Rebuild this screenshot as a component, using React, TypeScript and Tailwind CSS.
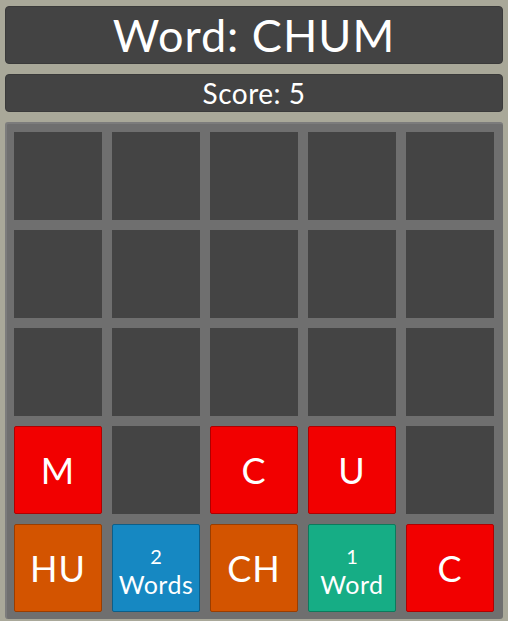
import React from "react";

type Cell =
  | { kind: "empty" }
  | { kind: "tile"; color: string; text: string }
  | { kind: "count"; color: string; n: string; label: string };

const E: Cell = { kind: "empty" };

const cells: Cell[] = [
  E, E, E, E, E,
  E, E, E, E, E,
  E, E, E, E, E,
  { kind: "tile", color: "red", text: "M" },
  E,
  { kind: "tile", color: "red", text: "C" },
  { kind: "tile", color: "red", text: "U" },
  E,
  { kind: "tile", color: "orange", text: "HU" },
  { kind: "count", color: "blue", n: "2", label: "Words" },
  { kind: "tile", color: "orange", text: "CH" },
  { kind: "count", color: "green", n: "1", label: "Word" },
  { kind: "tile", color: "red", text: "C" },
];

function colorClass(c: string) {
  switch (c) {
    case "red":
      return "bg-[#f20000] border-[#b00000]";
    case "orange":
      return "bg-[#d35400] border-[#9a3d00]";
    case "blue":
      return "bg-[#1688c2] border-[#0d5e88]";
    case "green":
      return "bg-[#16ad85] border-[#0d7a5c]";
    default:
      return "bg-[#444444] border-[#444444]";
  }
}

export default function App() {
  return (
    <div
      className="w-[508px] h-[621px] bg-[#a9a899] flex flex-col gap-[10px] px-[5px] pt-[6px] overflow-hidden text-white"
      style={{ fontFamily: "Lato, 'Open Sans', sans-serif" }}
    >
      <div className="h-[58px] shrink-0 rounded-[4px] bg-[#434343] border border-[#3a3a3a] flex items-center justify-center text-[45px] leading-none tracking-[1px]">
        Word: CHUM
      </div>
      <div className="h-[38px] shrink-0 rounded-[4px] bg-[#434343] border border-[#3a3a3a] flex items-center justify-center text-[28px] leading-none tracking-[0.5px]">
        Score: 5
      </div>
      <div className="h-[497px] shrink-0 rounded-[3px] bg-[#6f6f6f] border-t-2 border-l-2 border-[#7c7c7c] pt-[8px] pl-[7px] pr-[9px] pb-[7px] grid grid-cols-5 grid-rows-5 gap-[10px]">
        {cells.map((c, i) => {
          if (c.kind === "empty") {
            return <div key={i} className="bg-[#444444]" />;
          }
          if (c.kind === "tile") {
            return (
              <div
                key={i}
                className={`border rounded-[2px] flex items-center justify-center text-[36px] leading-none tracking-[1px] ${colorClass(c.color)}`}
              >
                {c.text}
              </div>
            );
          }
          return (
            <div
              key={i}
              className={`border rounded-[2px] flex flex-col items-center justify-center leading-none pt-[6px] ${colorClass(c.color)}`}
            >
              <span className="text-[20px] leading-none">{c.n}</span>
              <span className="text-[25px] leading-none mt-[6px] tracking-[0.5px]">{c.label}</span>
            </div>
          );
        })}
      </div>
    </div>
  );
}
